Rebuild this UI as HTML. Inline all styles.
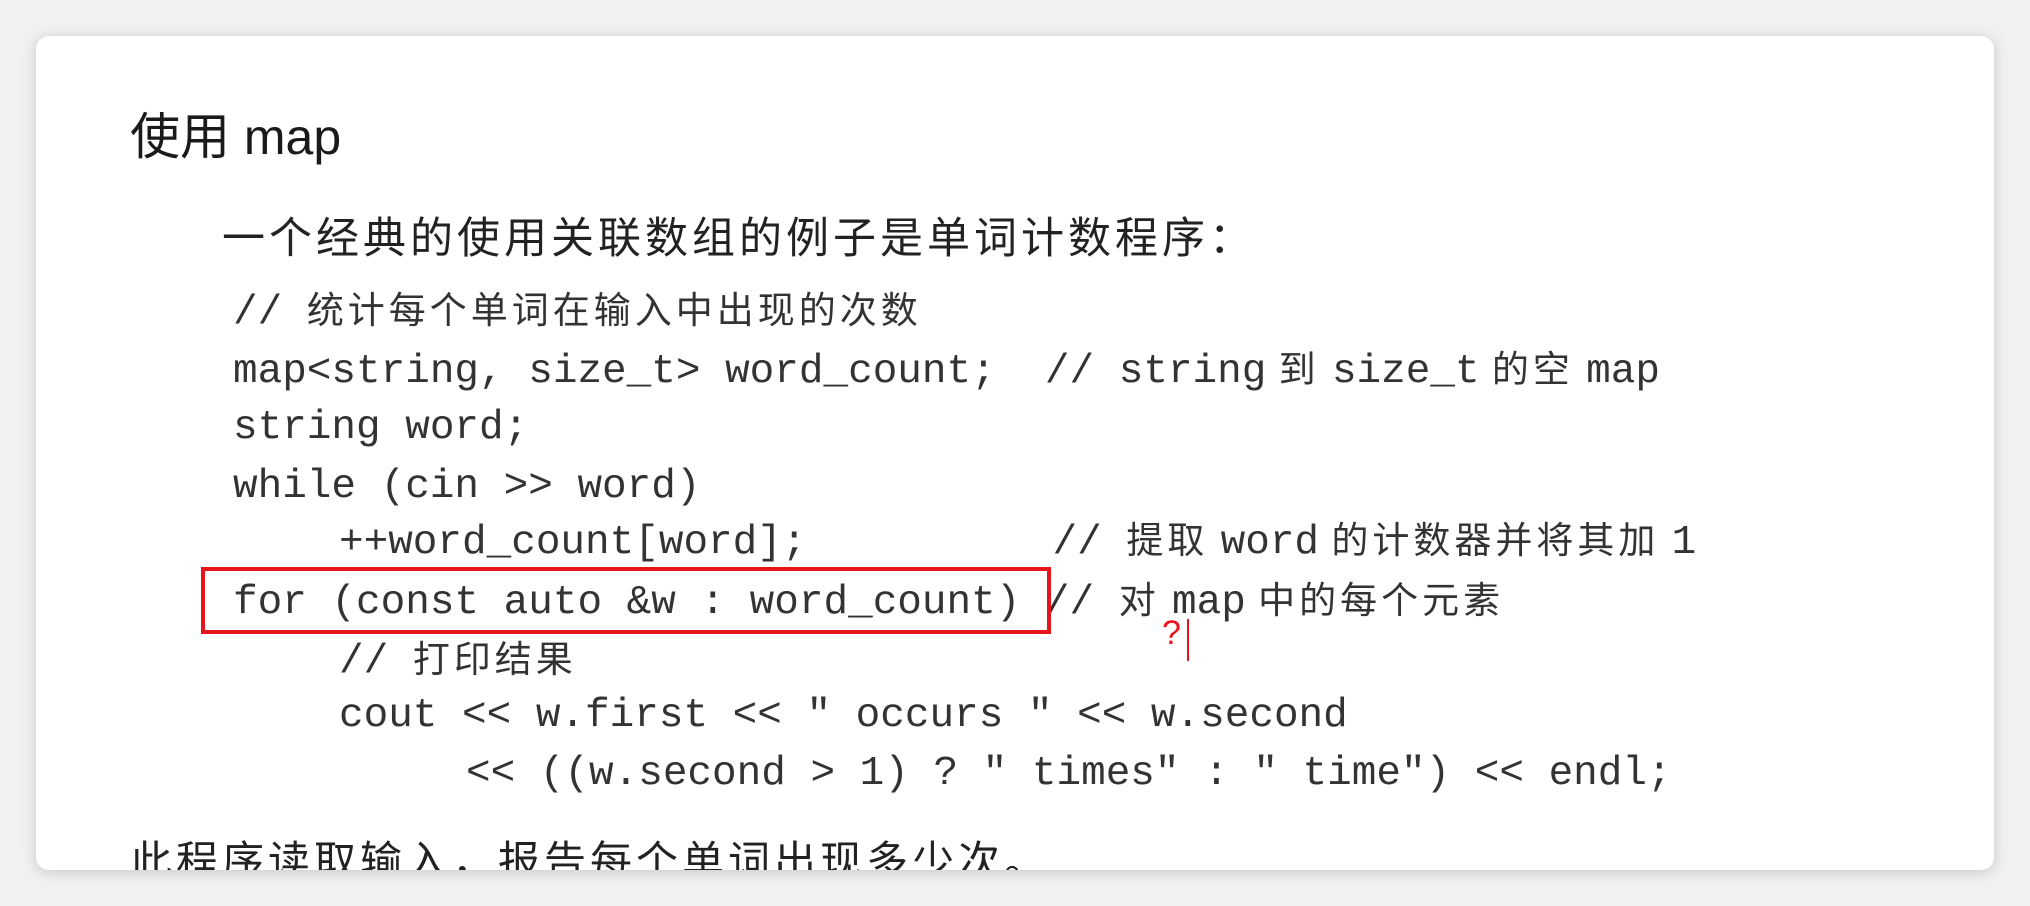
<!DOCTYPE html>
<html><head><meta charset="utf-8"><style>
html,body{margin:0;padding:0;width:2030px;height:906px;background:#f1f1f1;overflow:hidden}
.card{position:absolute;left:36px;top:36px;width:1958px;height:834px;background:#fff;border-radius:13px;box-shadow:0 2px 14px rgba(0,0,0,.18);overflow:hidden}
.t{position:absolute;white-space:pre;line-height:1;color:#262626}
.m{font-family:"Liberation Mono","Noto Sans CJK SC",monospace;font-size:41px;color:#333}
.c{font-family:"Noto Sans CJK SC",sans-serif;font-size:37px;letter-spacing:4px}
</style></head><body>
<div class="card">
<div class="t" style="left:94px;top:76px;font-family:'Liberation Sans','Noto Sans CJK SC',sans-serif;font-size:50px;color:#1a1a1a">使用 map</div>
<div class="t" style="left:186px;top:178px;font-size:43px;letter-spacing:4px;font-family:'Noto Sans CJK SC',sans-serif;color:#222">一个经典的使用关联数组的例子是单词计数程序：</div>
<div class="t m" style="left:197px;top:253px">// <span class="c">统计每个单词在输入中出现的次数</span></div>
<div class="t m" style="left:197px;top:312px">map&lt;string, size_t&gt; word_count;  // string<span class="c"> 到 </span>size_t<span class="c"> 的空 </span>map</div>
<div class="t m" style="left:197px;top:372px">string word;</div>
<div class="t m" style="left:197px;top:431px">while (cin &gt;&gt; word)</div>
<div class="t m" style="left:303px;top:483px">++word_count[word];          // <span class="c">提取 </span>word<span class="c"> 的计数器并将其加 </span>1</div>
<div class="t m" style="left:197px;top:543px">for (const auto &amp;w : word_count) // <span class="c">对 </span>map<span class="c"> 中的每个元素</span></div>
<div style="position:absolute;left:165px;top:531px;width:842px;height:59px;border:4px solid #e8141b"></div>
<div class="t" style="left:1126px;top:580px;font-family:'Liberation Sans',sans-serif;font-size:34px;color:#e8141b">?</div>
<div style="position:absolute;left:1151px;top:583px;width:2px;height:42px;background:#e8141b"></div>
<div class="t m" style="left:303px;top:602px">// <span class="c">打印结果</span></div>
<div class="t m" style="left:303px;top:660px">cout &lt;&lt; w.first &lt;&lt; " occurs " &lt;&lt; w.second</div>
<div class="t m" style="left:430px;top:718px">&lt;&lt; ((w.second &gt; 1) ? " times" : " time") &lt;&lt; endl;</div>
<div class="t" style="left:94px;top:802px;font-family:'Noto Sans CJK SC',sans-serif;font-size:42px;letter-spacing:4px;color:#222">此程序读取输入，报告每个单词出现多少次。</div>
</div>
</body></html>
